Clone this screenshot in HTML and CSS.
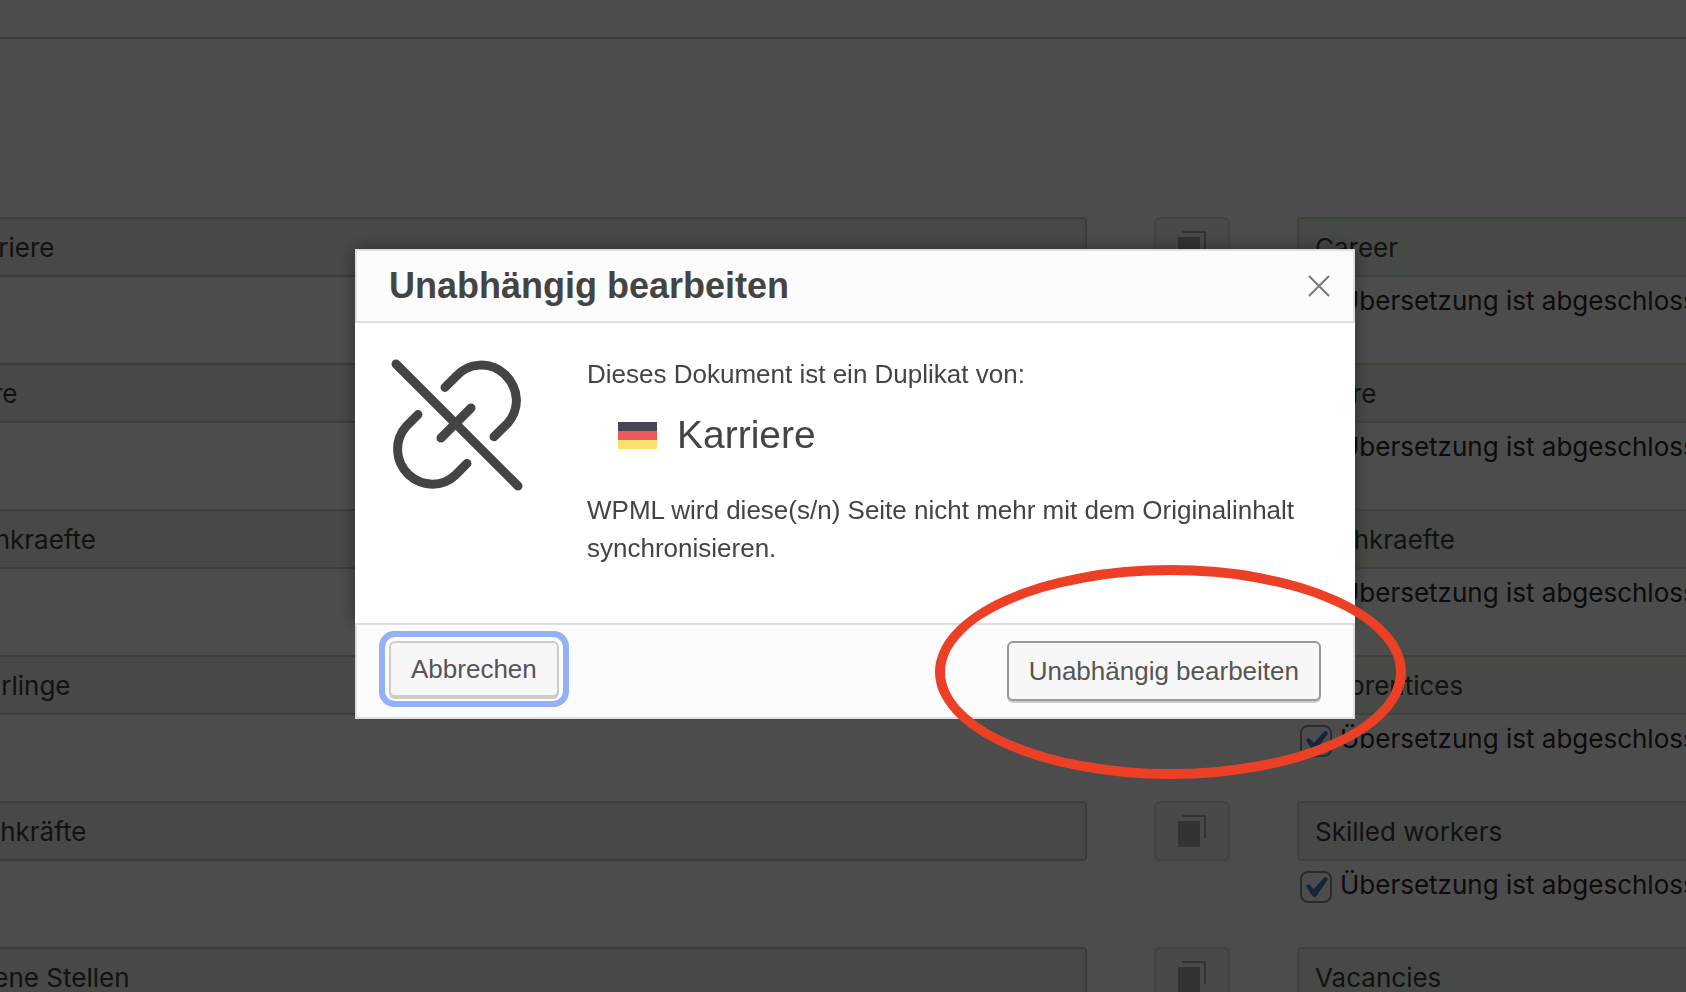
FILE: index.html
```
<!DOCTYPE html>
<html lang="de">
  <head>
    <meta charset="utf-8">
    <meta name="viewport" content="width=device-width, initial-scale=1">
    <title>Unabhängig bearbeiten</title>
    <link rel="stylesheet" href="styles.css">
  </head>
  <body>

  <svg class="sprite" aria-hidden="true">
    <symbol id="copy" viewBox="0 0 28 32">
      <path d="M0 6h22v26H0z" fill="currentColor"/>
      <path d="M4 1h23v22" fill="none" stroke="currentColor" stroke-width="2"/>
    </symbol>
  </svg>

  <div id="editor">
    <header class="topbar"></header>

    <main class="fields">
      <div class="row">
        <input class="original" type="text" value="Karriere" aria-label="Original 1" readonly>
        <button class="copy" type="button" aria-label="Kopieren"><svg><use href="#copy"/></svg></button>
        <div class="translation">
          <input type="text" value="Career" aria-label="Übersetzung 1">
          <label><input type="checkbox" checked> <span>Übersetzung ist abgeschlossen</span></label>
        </div>
      </div>
      <div class="row">
        <input class="original" type="text" value="lehre" aria-label="Original 2" readonly>
        <button class="copy" type="button" aria-label="Kopieren"><svg><use href="#copy"/></svg></button>
        <div class="translation">
          <input type="text" value="lehre" aria-label="Übersetzung 2">
          <label><input type="checkbox" checked> <span>Übersetzung ist abgeschlossen</span></label>
        </div>
      </div>
      <div class="row">
        <input class="original" type="text" value="fachkraefte" aria-label="Original 3" readonly>
        <button class="copy" type="button" aria-label="Kopieren"><svg><use href="#copy"/></svg></button>
        <div class="translation">
          <input type="text" value="fachkraefte" aria-label="Übersetzung 3">
          <label><input type="checkbox" checked> <span>Übersetzung ist abgeschlossen</span></label>
        </div>
      </div>
      <div class="row">
        <input class="original" type="text" value="Lehrlinge" aria-label="Original 4" readonly>
        <button class="copy" type="button" aria-label="Kopieren"><svg><use href="#copy"/></svg></button>
        <div class="translation">
          <input type="text" value="Apprentices" aria-label="Übersetzung 4">
          <label><input type="checkbox" checked> <span>Übersetzung ist abgeschlossen</span></label>
        </div>
      </div>
      <div class="row">
        <input class="original" type="text" value="Fachkräfte" aria-label="Original 5" readonly>
        <button class="copy" type="button" aria-label="Kopieren"><svg><use href="#copy"/></svg></button>
        <div class="translation">
          <input type="text" value="Skilled workers" aria-label="Übersetzung 5">
          <label><input type="checkbox" checked> <span>Übersetzung ist abgeschlossen</span></label>
        </div>
      </div>
      <div class="row">
        <input class="original" type="text" value="Offene Stellen" aria-label="Original 6" readonly>
        <button class="copy" type="button" aria-label="Kopieren"><svg><use href="#copy"/></svg></button>
        <div class="translation">
          <input type="text" value="Vacancies" aria-label="Übersetzung 6">
          <label><input type="checkbox" checked> <span>Übersetzung ist abgeschlossen</span></label>
        </div>
      </div>
    </main>
  </div>

  <div id="overlay">
    <div class="dialog" role="dialog" aria-modal="true" aria-labelledby="dialog-title">
      <div class="dialog-main">
        <div class="dialog-header">
          <h1 id="dialog-title">Unabhängig bearbeiten</h1>
          <button class="close" type="button" aria-label="Schließen">
            <svg viewBox="0 0 20 20"><path d="M0 0l20 20M20 0L0 20"/></svg>
          </button>
        </div>
        <div class="dialog-body">
          <!-- broken link -->
          <svg class="unlink" viewBox="9 10 136 136" aria-hidden="true">
            <path d="M16 19L138 141"/>
            <path d="M91 63L61 93"/>
            <path d="M65 42.4L76.5 31C88 18 110 15.5 125 29.5C139.5 44 140 64 127.5 78.5L114 91.7"/>
            <path d="M38 69.6L26.5 81C14 95 14.5 116 28.5 129.5C42.5 142.5 63 142 75.5 130L87 118.4"/>
          </svg>
          <div>
            <p>Dieses Dokument ist ein Duplikat von:</p>
            <div class="document">
              <svg class="flag" viewBox="0 0 39 27" role="img" aria-label="Deutsch">
                <path fill="#464655" d="M0 0h39v9H0z"/>
                <path fill="#ee5a5b" d="M0 9h39v9H0z"/>
                <path fill="#fae170" d="M0 18h39v9H0z"/>
              </svg>
              <span>Karriere</span>
            </div>
            <p>WPML wird diese(s/n) Seite nicht mehr mit dem Originalinhalt synchronisieren.</p>
          </div>
        </div>
      </div>
      <div class="dialog-footer">
        <button class="button cancel" type="button">Abbrechen</button>
        <button class="button confirm" type="button">Unabhängig bearbeiten</button>
      </div>
      <div class="marker"></div>
    </div>
  </div>

  </body>
</html>
```

FILE: styles.css
```
* {
  box-sizing: border-box;
}
html,
body {
  height: 100%;
}
body {
  margin: 0;
  overflow: hidden;
  background: #fff;
  color: #282828;
  font: 26px/28px Inter, sans-serif;
}
button,
input {
  font: inherit;
}
.sprite {
  position: absolute;
  width: 0;
  height: 0;
}

/* translation editor, runs past both sides of the window */
#editor {
  height: 100%;
  overflow: hidden;
}
.topbar {
  height: 39px;
  border-bottom: 2px solid #c3c4c7;
}
.fields {
  display: grid;
  gap: 44px;
  margin: 178px -40px 0 -62px;
}
.row {
  display: grid;
  grid-template-columns: minmax(0, 1fr) 76px 429px;
  column-gap: 67px;
  align-items: start;
}
.row input[type="text"] {
  width: 100%;
  height: 60px;
  padding: 0 16px;
  border: 2px solid #cfe0c8;
  border-radius: 4px;
  background: #e6f7e3;
  color: #3c3c3c;
}
.row input.original {
  border-color: #c8c8c8;
  background: #f0f0f0;
}
.copy {
  display: flex;
  align-items: center;
  justify-content: center;
  height: 60px;
  padding: 0;
  border: 2px solid #dcdcdc;
  border-radius: 6px;
  background: #f0f6f5;
  color: #a5aaaf;
}
.copy svg {
  width: 28px;
  height: 32px;
}
.translation label {
  display: flex;
  gap: 8px;
  height: 32px;
  margin: 10px 0 0 3px;
  white-space: nowrap;
}
.translation input[type="checkbox"] {
  flex: none;
  width: 32px;
  height: 32px;
  margin: 0;
  appearance: none;
  border: 2px solid #8c8f94;
  border-radius: 8px;
  background: #fff;
}
.translation input[type="checkbox"]:checked::before {
  content: "";
  display: block;
  width: 22px;
  height: 20px;
  margin: 4px;
  background: #4a80c0;
  clip-path: polygon(0 46%, 8% 36%, 16% 38%, 36% 60%, 82% 2%, 94% 0, 100% 12%, 46% 98%, 38% 100%, 30% 98%);
}

/* dialog */
#overlay {
  position: fixed;
  inset: 0;
  display: flex;
  align-items: center;
  justify-content: center;
  padding: 0 0 24px 24px;
  background: rgba(0, 0, 0, 0.7);
}
.dialog {
  position: relative;
  width: 1000px;
  max-width: 100%;
  color: #444;
  font: 26px/38px "Liberation Sans", Helvetica, sans-serif;
}
.dialog-main {
  background: #fff;
  box-shadow: 0 0 16px rgba(0, 0, 0, 0.4);
}
.dialog-header {
  display: flex;
  align-items: center;
  justify-content: space-between;
  height: 74px;
  padding: 0 24px 0 32px;
  border: 2px solid #dfdfdf;
  background: #fcfcfc;
}
.dialog-header h1 {
  margin: 0;
  font-size: 36px;
}
.close {
  display: flex;
  padding: 0;
  border: 0;
  background: none;
}
.close svg {
  width: 20px;
  height: 20px;
  overflow: visible;
  stroke: #777;
  stroke-width: 2;
}
.dialog-body {
  display: grid;
  grid-template-columns: 136px 1fr;
  gap: 62px;
  padding: 32px 34px 56px;
}
.dialog-body p {
  margin: 0;
}
.unlink {
  width: 136px;
  fill: none;
  stroke: #444;
  stroke-width: 9;
  stroke-linecap: round;
}
.document {
  display: flex;
  align-items: center;
  gap: 20px;
  margin: 20px 0 34px;
  padding-left: 31px;
  font-size: 39px;
  line-height: 44px;
}
.flag {
  width: 39px;
  height: 27px;
}
.dialog-footer {
  position: relative;
  display: flex;
  align-items: flex-start;
  justify-content: space-between;
  padding: 16px 32px;
  border: 2px solid #dfdfdf;
  background: #fcfcfc;
}
.button {
  height: 60px;
  padding: 0 20px;
  border: 2px solid #999;
  border-radius: 6px;
  background: #f7f7f7;
  box-shadow: 0 2px 0 #ccc;
  color: #555;
}
.cancel {
  height: 56px;
  border-color: #ccc;
  box-shadow: 0 2px 0 #ccc, 0 0 0 4px #fff, 0 0 0 10px #94b0f6;
}
.marker {
  position: absolute;
  top: 316px;
  right: -51px;
  width: 471px;
  height: 214px;
  border: 10px solid #eb4026;
  border-radius: 50%;
  pointer-events: none;
}
```
